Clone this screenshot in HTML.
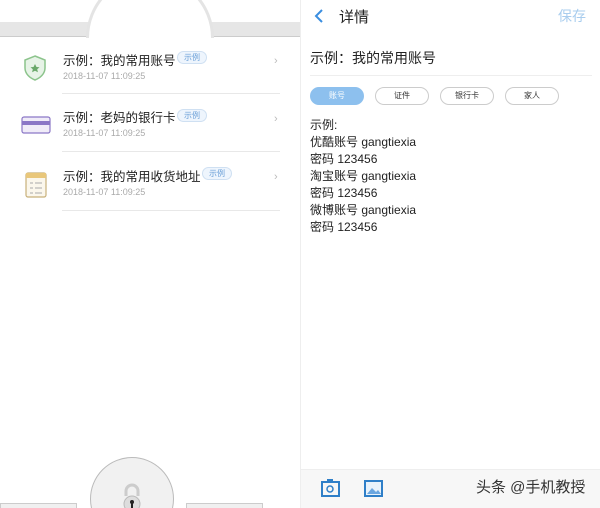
<!DOCTYPE html><html><head><meta charset="utf-8"><style>
html,body{margin:0;width:600px;height:508px;overflow:hidden}
body{background:#fff;font-family:"Liberation Sans","Noto Sans CJK SC",sans-serif}
#w{position:relative;width:600px;height:508px;overflow:hidden}
.a{position:absolute}
.t{font-size:12.5px;color:#222;white-space:nowrap;line-height:16px}
.d{font-size:9px;color:#aaa;line-height:11px}
.tag{font-size:8px;color:#6a9fd8;border:1px solid #cfe0f2;background:#eef5fd;border-radius:8px;padding:0 6px;line-height:11px}
.sep{height:1px;background:#e8e8e8}
.pill{top:87px;width:52px;height:16px;border:1px solid #ccc;border-radius:9px;font-size:8px;text-align:center;line-height:16px;color:#333}
.l{left:310px;font-size:12px;color:#222;line-height:15px}
</style></head><body><div id="w">
<div class="a" style="left:0;top:22px;width:88px;height:14px;background:#e6e6e6;border-bottom:1px solid #ccc"></div>
<div class="a" style="left:212px;top:22px;width:88px;height:14px;background:#e6e6e6;border-bottom:1px solid #ccc"></div>
<div class="a" style="left:86px;top:0;width:128px;height:38px;overflow:hidden"><div style="position:absolute;left:0;top:-26px;width:128px;height:128px;border-radius:50%;border:3px solid #e4e4e4;background:#fff;box-sizing:border-box"></div></div>
<svg class="a" style="left:22px;top:54px" width="26" height="28" viewBox="0 0 26 28"><path d="M13 2 L23 6 V14 C23 20 18 24 13 26 C8 24 3 20 3 14 V6 Z" fill="#e7f3e7" stroke="#8cc48c" stroke-width="1.5"/><path d="M13 10 l1.5 3 3 .3-2.3 2 .7 3-2.9-1.6-2.9 1.6.7-3-2.3-2 3-.3z" fill="#6aa86a"/></svg>
<svg class="a" style="left:21px;top:114px" width="30" height="22"><rect x="1" y="3" width="28" height="16" rx="2" fill="#f0ecf8" stroke="#8b77c6" stroke-width="1.2"/><rect x="1" y="7" width="28" height="4" fill="#8b77c6"/></svg>
<svg class="a" style="left:25px;top:171px" width="22" height="28"><rect x="1" y="2" width="20" height="24" rx="2" fill="#fbf7ec" stroke="#c8b07a" stroke-width="1.2"/><rect x="1" y="2" width="20" height="5" fill="#e9c77a"/><path d="M5 12h3M10 12h7M5 17h3M10 17h7M5 22h3M10 22h7" stroke="#aaa"/></svg>
<div class="a t" style="left:63px;top:53px">示例：我的常用账号</div><div class="a tag" style="left:177px;top:51px">示例</div>
<div class="a d" style="left:63px;top:71px">2018-11-07 11:09:25</div>
<div class="a sep" style="left:62px;top:93px;width:218px"></div>
<div class="a t" style="left:63px;top:110px">示例：老妈的银行卡</div><div class="a tag" style="left:177px;top:109px">示例</div>
<div class="a d" style="left:63px;top:128px">2018-11-07 11:09:25</div>
<div class="a sep" style="left:62px;top:151px;width:218px"></div>
<div class="a t" style="left:63px;top:169px">示例：我的常用收货地址</div><div class="a tag" style="left:202px;top:167px">示例</div>
<div class="a d" style="left:63px;top:187px">2018-11-07 11:09:25</div>
<div class="a sep" style="left:62px;top:210px;width:218px"></div>
<div class="a" style="left:274px;top:55px;color:#bbb;font-size:11px;line-height:12px">›</div>
<div class="a" style="left:274px;top:113px;color:#bbb;font-size:11px;line-height:12px">›</div>
<div class="a" style="left:274px;top:171px;color:#bbb;font-size:11px;line-height:12px">›</div>
<div class="a" style="left:0;top:503px;width:75px;height:4px;background:#f0f0f0;border:1px solid #ccc;border-bottom:0"></div>
<div class="a" style="left:186px;top:503px;width:75px;height:4px;background:#f0f0f0;border:1px solid #ccc;border-bottom:0"></div>
<div class="a" style="left:90px;top:457px;width:84px;height:51px;overflow:hidden"><div style="position:absolute;left:0;top:0;width:82px;height:82px;border-radius:50%;border:1px solid #bbb;background:#f1f1f1"></div>
<svg style="position:absolute;left:28px;top:25px" width="28" height="26"><path d="M8 14 V9 a6 6 0 0 1 12 0 V14" fill="none" stroke="#ccc" stroke-width="3"/><circle cx="14" cy="22" r="8" fill="#ddd" stroke="#bbb"/><circle cx="14" cy="20" r="2" fill="#222"/><rect x="13" y="20" width="2" height="6" fill="#222"/></svg></div>
<div class="a" style="left:300px;top:0;width:1px;height:508px;background:#eee"></div>
<svg class="a" style="left:313px;top:8px" width="12" height="16"><path d="M9 2 L3 8 L9 14" fill="none" stroke="#3a8ee0" stroke-width="2"/></svg>
<div class="a" style="left:339px;top:6px;font-size:15px;color:#222">详情</div>
<div class="a" style="left:558px;top:6px;font-size:14px;color:#a9cdee">保存</div>
<div class="a" style="left:310px;top:48px;font-size:14px;color:#222">示例：我的常用账号</div>
<div class="a sep" style="left:310px;top:75px;width:282px;background:#eee"></div>
<div class="a pill" style="left:310px;background:#8dc0ee;border-color:#8dc0ee;color:#fff">账号</div>
<div class="a pill" style="left:375px">证件</div>
<div class="a pill" style="left:440px">银行卡</div>
<div class="a pill" style="left:505px">家人</div>
<div class="a l" style="top:118px">示例:</div>
<div class="a l" style="top:135px">优酷账号 gangtiexia</div>
<div class="a l" style="top:152px">密码 123456</div>
<div class="a l" style="top:169px">淘宝账号 gangtiexia</div>
<div class="a l" style="top:186px">密码 123456</div>
<div class="a l" style="top:203px">微博账号 gangtiexia</div>
<div class="a l" style="top:220px">密码 123456</div>
<div class="a" style="left:301px;top:469px;width:299px;height:39px;background:#f7f7f7;border-top:1px solid #eee;box-sizing:border-box"></div>
<svg class="a" style="left:320px;top:478px" width="22" height="20"><rect x="2" y="4" width="17" height="14" fill="none" stroke="#2f7fc8" stroke-width="2"/><circle cx="10" cy="11" r="3" fill="none" stroke="#2f7fc8" stroke-width="1.5"/><rect x="7" y="1" width="6" height="3" fill="#2f7fc8"/></svg>
<svg class="a" style="left:363px;top:478px" width="22" height="20"><rect x="2" y="3" width="17" height="15" fill="#e8f2fb" stroke="#2f7fc8" stroke-width="2"/><path d="M4 16 L9 10 L13 14 L15 12 L18 16Z" fill="#6aa6e0"/></svg>
<div class="a" style="left:476px;top:478px;font-size:15px;color:#333;line-height:20px">头条 @手机教授</div>
</div></body></html>
